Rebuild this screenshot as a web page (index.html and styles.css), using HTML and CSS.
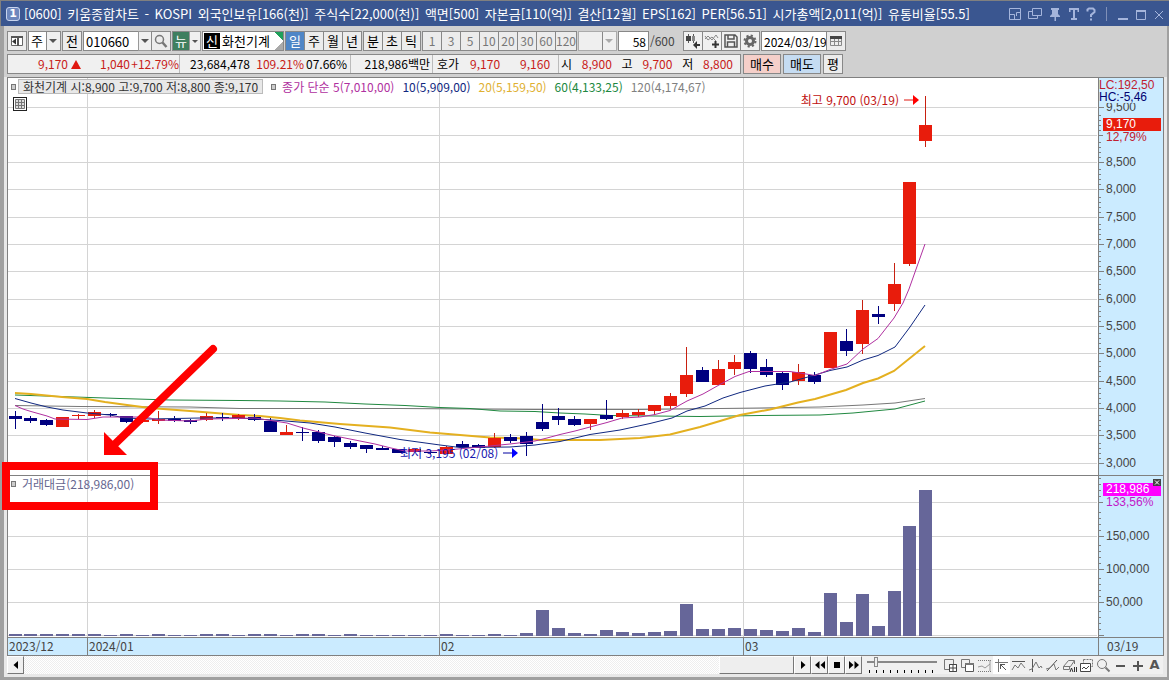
FILE: index.html
```html
<!DOCTYPE html>
<html lang="ko">
<head>
<meta charset="utf-8">
<title>[0600] 키움종합차트</title>
<link rel="stylesheet" href="styles.css">
</head>
<body>
<div class="window">
  <header class="titlebar">
    <span class="win-num">1</span>
    <h1 class="title">
      <span>[0600]</span><span>키움종합차트</span><span>-</span><span>KOSPI</span><span>외국인보유[166(천)]</span><span>주식수[22,000(천)]</span><span>액면[500]</span><span>자본금[110(억)]</span><span>결산[12월]</span><span>EPS[162]</span><span>PER[56.51]</span><span>시가총액[2,011(억)]</span><span>유통비율[55.5]</span>
    </h1>
    <div class="win-tools">
      <button aria-label="화면 축소"><svg width="14" height="14" viewBox="0 0 14 14"><path d="M1.500 1.500h11v11h-11zM1.500 7.500h5v5M12 5.500H8.500V9"/></svg></button>
      <button aria-label="화면 복사"><svg width="14" height="14" viewBox="0 0 14 14"><path d="M4.500 1.500h9v7h-9zM4 4.500H.500v7h9V9"/></svg></button>
      <button aria-label="고정"><svg width="14" height="14" viewBox="0 0 14 14"><path class="fill" d="M3 1h8v2h-1v4l2 2v1H8v4H6.500v-4H2V9l2-2V3H3z"/></svg></button>
      <button aria-label="글꼴"><svg width="12" height="14" viewBox="0 0 12 14"><path class="fill" d="M1 1h10v4H9.500V3H7v8h2v2H3v-2h2V3H2.500v2H1z"/></svg></button>
      <button aria-label="도움말"><svg width="10" height="14" viewBox="0 0 10 14"><path class="thick" d="M1.500 4.500V2.500L3 1.500h4l1.500 1.500v2L5 8v2"/><path class="fill" d="M4 11.500h2v2H4z"/></svg></button>
      <i class="bar"></i>
      <button aria-label="최소화"><svg width="12" height="14" viewBox="0 0 12 14"><path class="thick" d="M1 12h10"/></svg></button>
      <button aria-label="최대화"><svg width="12" height="14" viewBox="0 0 12 14"><path d="M1.500 4h9v8.500h-9z"/><path class="thick" d="M1 4h10"/></svg></button>
      <button aria-label="닫기"><svg width="12" height="14" viewBox="0 0 12 14"><path d="M2 4l8 8M10 4l-8 8"/></svg></button>
    </div>
  </header>

  <main class="frame">
    <div class="toolbar">
      <button class="btn" aria-label="패널"><svg width="14" height="14" viewBox="0 0 14 14"><path d="M1.500 2.500h11v9h-11z" fill="#fff" stroke="#666"/><path d="M1 2h12v2H1zM7 3h2v9H7z" fill="#555"/><path d="M6 4.500v6L2 7.500z" fill="#333"/></svg></button>
      <div class="combo combo-type"><select aria-label="종목 구분"><option>주</option></select></div>
      <button class="btn">전</button>
      <div class="group">
        <input class="field code" aria-label="종목 코드" value="010660">
        <button class="arrow" aria-label="종목 목록"></button>
        <button class="btn" aria-label="검색"><svg width="14" height="14" viewBox="0 0 14 14" fill="none" stroke="#777"><circle cx="5.500" cy="5.500" r="4" stroke-width="1.500"/><path d="M8.500 8.500l4 4.500" stroke-width="2.500"/></svg></button>
      </div>
      <div class="group"><button class="btn news">뉴</button><button class="arrow small" aria-label="뉴스 목록"></button></div>
      <div class="stock"><b>신</b><span>화천기계</span></div>
      <div class="group periods">
        <button class="btn active">일</button><button class="btn">주</button><button class="btn">월</button><button class="btn">년</button>
      </div>
      <div class="group periods">
        <button class="btn">분</button><button class="btn">초</button><button class="btn">틱</button>
      </div>
      <div class="group periods off">
        <button class="btn">1</button><button class="btn">3</button><button class="btn">5</button><button class="btn">10</button><button class="btn">20</button><button class="btn">30</button><button class="btn">60</button><button class="btn">120</button>
      </div>
      <div class="combo combo-min"><select aria-label="분 단위" disabled><option></option></select></div>
      <label class="count"><input class="field" value="58" aria-label="조회 개수"><span>/600</span></label>
      <div class="group icons">
        <button class="btn" aria-label="봉 추가"><svg width="16" height="16" viewBox="0 0 16 16"><path d="M3.500 1v9M8.500 1v9" stroke="#555"/><path d="M1 3h5v5H1z" fill="#444"/><path d="M7 3h3v5H7z" fill="#888"/><path d="M15 11h-3V8l-4 4 4 4v-3h3z" fill="#333"/></svg></button>
        <button class="btn" aria-label="지표 추가"><svg width="16" height="16" viewBox="0 0 16 16" fill="none"><path d="M1 6l3-3 4 4 4-5 2 3M1 3l3 4 4-3 4 4" stroke="#888"/><path d="M11.500 8v7M8 11.500h7" stroke="#333" stroke-width="2"/></svg></button>
        <button class="btn" aria-label="저장"><svg width="16" height="16" viewBox="0 0 16 16" fill="none" stroke="#555" stroke-width="1.500"><path d="M2 2h10l2 2v10H2zM5 2v4h6V2M4.500 14V9h7v5"/></svg></button>
        <button class="btn" aria-label="설정"><svg width="16" height="16" viewBox="0 0 16 16" fill="none" stroke="#666"><circle cx="8" cy="8" r="3.500" stroke-width="3"/><circle cx="8" cy="8" r="5.500" stroke-width="2" stroke-dasharray="2.160"/></svg></button>
      </div>
      <div class="group date">
        <input class="field" aria-label="조회 일자" value="2024/03/19">
        <button class="btn" aria-label="달력"><svg width="12" height="12" viewBox="0 0 12 12" fill="none"><path d="M.500 2.500h11v8H.500zM.500 6.500h11M4.500 3v8M8.500 3v8" stroke="#888"/><path d="M0 1h12v3H0z" fill="#444"/></svg></button>
      </div>
    </div>

    <div class="quotes">
      <div class="quote-box">
        <div class="cell c-price red"><span class="w-a">9,170</span><svg width="10" height="9" viewBox="0 0 10 9"><path d="M5 0l5 9H0z" fill="#e01810"/></svg><span class="w-b">1,040</span><span class="w-c">+12.79%</span></div>
        <div class="cell c-vol"><span class="w-d">23,684,478</span><span class="w-g red">109.21%</span><span>07.66%</span></div>
        <div class="cell c-amt"><span>218,986백만</span></div>
        <div class="cell c-ask"><span>호가</span><span class="w-e red">9,170</span><span class="w-f red">9,160</span></div>
        <div class="cell c-ohl"><span>시</span><span class="red">8,900</span><span>고</span><span class="red">9,700</span><span>저</span><span class="red">8,800</span></div>
      </div>
      <button class="btn buy">매수</button>
      <button class="btn sell">매도</button>
      <button class="btn">평</button>
    </div>

    <section class="chart">
      <div class="plot">
        <svg id="plot" class="marks" viewBox="8 78 1090 559" preserveAspectRatio="none" role="img" aria-label="화천기계 일봉 차트"></svg>
        <div class="legend">
          <i class="knob"></i><span class="legend-name">화천기계 시:8,900 고:9,700 저:8,800 종:9,170</span>
          <i class="knob"></i><span class="ma5">종가 단순 5(7,010,00)</span><span class="ma10">10(5,909,00)</span><span class="ma20">20(5,159,50)</span><span class="ma60">60(4,133,25)</span><span class="ma120">120(4,174,67)</span>
        </div>
        <button class="grid-btn" aria-label="표 보기"><svg width="10" height="10" viewBox="0 0 10 10" fill="#ddd" stroke="#777"><path d="M.500.500h9v9h-9zM.500 3.500h9M.500 6.500h9M3.500.500v9M6.500.500v9"/></svg></button>
        <span class="note high">최고 9,700 (03/19)<svg width="15" height="10" viewBox="0 0 15 10"><path d="M0 5h10" stroke="#e01810"/><path d="M9 0l6 5-6 5z" fill="#f00"/></svg></span>
        <span class="note low">최저 3,195 (02/08)<svg width="15" height="10" viewBox="0 0 15 10"><path d="M0 5h10" stroke="#0000a0"/><path d="M9 0l6 5-6 5z" fill="#00f"/></svg></span>
        <div class="legend vol-legend"><i class="knob"></i><span>거래대금(218,986,00)</span></div>
      </div>
      <div class="axis">
        <svg id="axis" class="marks" viewBox="1098 78 65 559" preserveAspectRatio="none" aria-hidden="true"></svg>
        <div id="labels"></div>
        <div class="limits"><span class="lc">LC:192,50</span><span>HC:-5,46</span></div>
        <div class="tag tag-price"><b>9,170</b><span>12,79%</span></div>
        <div class="tag tag-vol"><b>218,986</b><span>133,56%</span><button aria-label="닫기"><svg width="8" height="7" viewBox="0 0 8 7"><path d="M2 1.500l4 4M6 1.500l-4 4" stroke="#fff"/></svg></button></div>
      </div>
      <div class="dates"><span class="d0">2023/12</span><span class="d1">2024/01</span><span class="d2">02</span><span class="d3">03</span></div>
      <div class="date-now">03/19</div>
    </section>

    <footer class="bottom">
      <button class="bev" aria-label="왼쪽"><svg width="14" height="14" viewBox="0 0 14 14"><path d="M9 3v8L4.500 7z"/></svg></button>
      <div class="track"><div class="thumb"></div></div>
      <button class="bev" aria-label="오른쪽"><svg width="14" height="14" viewBox="0 0 14 14"><path d="M5 3v8l4.500-4z"/></svg></button>
      <button class="bev" aria-label="뒤로"><svg width="14" height="14" viewBox="0 0 14 14"><path d="M6.500 3v8L2 7zM12 3v8L7.500 7z"/></svg></button>
      <button class="bev" aria-label="정지"><svg width="14" height="14" viewBox="0 0 14 14"><path d="M4 4h6v6H4z"/></svg></button>
      <button class="bev" aria-label="앞으로"><svg width="14" height="14" viewBox="0 0 14 14"><path d="M2 3v8l4.500-4zM7.500 3v8L12 7z"/></svg></button>
      <div class="speed"><input type="range" aria-label="속도" min="0" max="10" value="1"></div>
      <div class="tools">
        <button aria-label="차트 추가"><svg viewBox="0 0 15 15"><path d="M1.500 1.500h9v10h-9z"/><path d="M6.500 6.500h7v7h-7z" fill="#fff"/><path d="M6.500 6.500h7v7h-7zM10 6.500v7M6.500 10h7" stroke="#444"/></svg></button>
        <button aria-label="차트 겹치기"><svg viewBox="0 0 15 15"><path d="M1.500 1.500h8v8h-8z"/><path d="M5.500 5.500h8v8h-8z" fill="#fff" stroke="#555"/><path d="M5 6h9" stroke-width="2"/></svg></button>
        <button aria-label="구간"><svg viewBox="0 0 15 15"><path d="M1 2.500h13M1 13.500h13" stroke-dasharray="1 1"/><path d="M1 9l4-1 3 2 5-4M13 2v11" stroke="#999"/></svg></button>
        <button class="on" aria-label="선택"><svg viewBox="0 0 15 15"><path d="M1 4.500h13M4.500 1v13"/><path d="M6 6l6 6M6.500 11V6.500H11" stroke="#555"/></svg></button>
        <button aria-label="수평선"><svg viewBox="0 0 15 15"><path d="M1 3.500h13" stroke="#555"/><path d="M1 12l3-5 3 3 3-5 4 5"/></svg></button>
        <button aria-label="수직선"><svg viewBox="0 0 15 15"><path d="M4.500 1v13" stroke="#555"/><path d="M1 12l3-1 4-7 3 6 2-2 1 2"/></svg></button>
        <button aria-label="추세선"><svg viewBox="0 0 15 15"><path d="M2 13L12 2" stroke="#555"/><path d="M1 11l4-1 4-4 2 6 3-3"/></svg></button>
        <button aria-label="모두 지우기"><svg viewBox="0 0 15 15"><path d="M1.500 8.500l5-6h6l-4 6zM1.500 8.500v3h6v-3M12.500 3v3"/><path d="M8 14l1.500-4 1.500 4M12.500 9v5M14.500 9v5" stroke="#333"/></svg></button>
        <button aria-label="차트 보기"><svg viewBox="0 0 15 15"><path d="M4.500 1.500h9v7h-9z" stroke-dasharray="2 1"/><path d="M1.500 5.500h10v8h-10z" fill="#fff" stroke="#444"/><path d="M3 11l2-2 2 2 3-3" stroke="#444"/></svg></button>
        <button aria-label="돋보기"><svg viewBox="0 0 15 15"><circle cx="6" cy="6" r="4.500"/><path d="M9.500 9.500l4 4" stroke-width="2"/></svg></button>
        <button aria-label="축소"><svg viewBox="0 0 15 15"><path d="M3 8h9" stroke="#555" stroke-width="2"/></svg></button>
        <button aria-label="확대"><svg viewBox="0 0 15 15"><path d="M3 8h10M8 3v10" stroke="#555" stroke-width="2"/></svg></button>
        <button class="auto" aria-label="자동">A</button>
      </div>
    </footer>
  </main>

  <svg class="callout" viewBox="0 0 1169 680" preserveAspectRatio="none" aria-hidden="true">
    <path d="M6 466h148v40H6z" fill="none" stroke="#f00" stroke-width="8"/>
    <path d="M213 349L116 443" stroke="#f00" stroke-width="8" stroke-linecap="round"/>
    <path d="M104 432v23h23z" fill="#f00"/>
  </svg>
</div>
<script src="chart.js"></script>
</body>
</html>
```
FILE: styles.css
```css
* { box-sizing: border-box; }
body { margin: 0; }
body, button, input, select {
  font-family: "Noto Sans CJK KR", sans-serif;
  font-size: 13px;
  line-height: 16px;
  color: #000;
}
button { margin: 0; padding: 0; border: 0; background: none; }
svg { display: block; flex: none; }

.window {
  position: relative;
  display: flex;
  flex-direction: column;
  min-width: 1169px;
  height: 100vh;
  border-top: 1px solid #808080;
  background: #e8e8e8;
  overflow: hidden;
  white-space: nowrap;
}

/* title bar */
.titlebar {
  display: flex;
  align-items: center;
  height: 25px;
  flex: none;
  padding: 0 4px 0 5px;
  background: #3a5690;
  border-left: 1px solid #808080;
}
.win-num {
  width: 14px;
  height: 14px;
  border: 1px solid #c8d4ee;
  border-radius: 3px;
  background: #6d87bd;
  color: #fff;
  font: bold 11px/12px "DejaVu Sans", sans-serif;
  text-align: center;
}
.title {
  display: flex;
  justify-content: space-between;
  flex: 0 1 946px;
  margin: 0 0 0 4px;
  color: #fff;
  font: 400 13px/24px "Noto Sans CJK KR", sans-serif;
}
.win-tools { display: flex; align-items: center; gap: 6px; margin-left: auto; }
.win-tools svg { fill: none; stroke: #a5b5dc; }
.win-tools .fill { fill: #a5b5dc; stroke: none; }
.win-tools .thick { stroke-width: 2; }
.bar { width: 1px; height: 14px; margin: 0 4px; background: #8090b8; }

/* body frame */
.frame {
  display: flex;
  flex-direction: column;
  flex: 1;
  min-height: 0;
  border: solid #a0a0a0;
  border-width: 0 2px 3px 4px;
}
.toolbar, .quotes {
  display: flex;
  align-items: center;
  background: #d0d0d0;
  padding-left: 3px;
}
.toolbar { align-items: flex-start; padding-top: 5px; height: 27px; gap: 1px; }
.quotes { height: 24px; gap: 2px; padding-bottom: 2px; }
.btn {
  display: flex;
  align-items: center;
  justify-content: center;
  min-width: 20px;
  height: 20px;
  border: 1px solid #888;
  background: #ececec;
}
.group { display: flex; }
.group > * + * { margin-left: -1px; }
.field {
  height: 20px;
  padding: 0 2px;
  border: 1px solid #888;
  border-radius: 0;
  background: #fff;
}
.code { width: 56px; }
.arrow {
  display: flex;
  align-items: center;
  justify-content: center;
  width: 14px;
  height: 20px;
  border: 1px solid #999;
  background: #f0f0f0;
}
.arrow::before, .combo::after {
  content: "";
  border: 4px solid transparent;
  border-top-color: #555;
  border-bottom: 0;
}
.arrow.small { width: 12px; }
.arrow.small::before { border-width: 3px 3px 0; }
.combo {
  position: relative;
  display: flex;
  width: 33px;
  height: 20px;
  border: 1px solid #888;
  background: linear-gradient(#888, #888) right 13px top / 1px 100% no-repeat #f0f0f0;
}
.combo::after { position: absolute; right: 3px; top: 7px; pointer-events: none; }
.combo select {
  appearance: none;
  width: 100%;
  margin-right: 14px;
  padding: 0 2px;
  border: 0;
  background: #fff;
}
.combo-min { width: 39px; border-color: #aaa; }
.combo-min::after { border-top-color: #aaa; }
.combo-min select { background: #eee; }
.news { width: 18px; min-width: 0; background: #3f7f5f; color: #fff; }
.stock {
  display: flex;
  align-items: center;
  width: 82px;
  height: 20px;
  padding: 1px;
  border: 1px solid #888;
  background:
    linear-gradient(to top right, transparent 50%, #1fa05a 50%) right top / 8px 9px no-repeat,
    linear-gradient(to bottom right, transparent 50%, #aaa 50%) right bottom / 8px 9px no-repeat,
    #fff;
}
.stock b { width: 16px; background: #000; color: #fff; font-weight: 400; text-align: center; }
.stock span { padding-left: 2px; }
.active { background: #4f86c6; color: #fff; }
.off .btn { color: #777; font-size: 12px; }
.count { display: flex; align-items: center; width: 64px; gap: 1px; }
.count input { width: 31px; text-align: right; font-size: 12px; }
.count span { color: #444; font-size: 12px; }
.icons .btn { background: #f0f0f0; }
.date input { width: 66px; font-size: 12px; padding-right: 0; }

/* quotes */
.quote-box {
  display: flex;
  width: 734px;
  height: 20px;
  border: 1px solid #888;
  background: #f0f0f0;
  font-size: 12px;
}
.cell { display: flex; align-items: center; border-right: 1px solid #bbb; text-align: right; }
.red { color: #c82018; }
.c-price { width: 172px; }
.c-vol { width: 171px; }
.c-amt { width: 82px; padding-right: 2px; justify-content: flex-end; }
.c-ask { width: 126px; padding-left: 4px; }
.c-ohl { flex: 1; justify-content: space-between; padding: 0 7px 0 2px; border: 0; }
.w-a { width: 63px; padding-right: 3px; }
.w-b { width: 50px; padding-right: 1px; }
.w-c { width: 48px; }
.w-d { width: 70px; }
.w-g { width: 56px; padding-right: 2px; }
.w-e { width: 41px; }
.w-f { width: 50px; }
.quotes > .btn { background: #ececec; }
.quotes > .buy { width: 38px; background: #f5cfc9; }
.quotes > .sell { width: 38px; background: #c5dcf2; }

/* chart */
.chart {
  display: grid;
  grid-template: minmax(0, 1fr) 18px / minmax(0, 1fr) 65px;
  flex: 1;
  min-height: 0;
  margin: 0 3px;
  border: 1px solid #808080;
  background: #cbebff;
  font-size: 12px;
}
.plot { position: relative; background: #fff; }
.axis { position: relative; color: #444; font-family: "Liberation Sans", sans-serif; }
.marks { position: absolute; width: 100%; height: 100%; }
.legend { position: absolute; top: 1px; left: 3px; display: flex; align-items: center; gap: 8px; height: 15px; }
.knob { width: 5px; height: 6px; border: 1px solid #777; background: #ccc; }
.legend-name { margin-left: -6px; padding: 0 4px; border: 1px solid #bbb; background: #e8e8e8; color: #333; line-height: 13px; }
.ma5 { color: #b030a0; margin-left: -2px; }
.ma10 { color: #102880; }
.ma20 { color: #e0b030; }
.ma60 { color: #208840; }
.ma120 { color: #808080; }
.vol-legend { top: 71.200%; gap: 6px; color: #666690; }
.grid-btn { position: absolute; left: 5px; top: 19px; padding: 1px; border: 1px solid #222; background: #fff; }
.note { position: absolute; display: flex; align-items: center; gap: 5px; }
.high { right: 179px; top: 14px; color: #c01010; }
.low { left: 392px; top: 367px; color: #1818b0; }
.tick { position: absolute; left: 8px; transform: translateY(-50%); }
.limits { position: absolute; inset: 0 0 auto 1px; display: flex; flex-direction: column; padding-top: 1px; background: #cbebff; color: #000070; line-height: 12px; }
.lc { color: #c02030; }
.tag { position: absolute; left: 5px; right: 2px; line-height: 12px; }
.tag b { display: block; padding-left: 3px; color: #fff; font-weight: 400; line-height: 13px; }
.tag span { padding-left: 3px; display: block; width: 54px; background: #cbebff; }
.tag-price { top: 40px; color: #c02030; }
.tag-price b { background: #e81c0c; }
.tag-vol { top: 405px; color: #c018c8; }
.tag-vol b { background: #f0f; }
.tag-vol button { position: absolute; right: 0; top: -4px; background: #444; }
.dates, .date-now { border-top: 1px solid #808080; color: #444; }
.dates { display: grid; grid-template-columns: 79px 352px 304px 1fr; }
.dates span { padding-left: 1px; }
.dates span + span { border-left: 1px solid #808080; }
.date-now { padding-left: 8px; border-left: 1px solid #808080; }

/* bottom bar */
.bottom { display: flex; height: 21px; padding: 0 4px 3px 3px; background: #e8e8e8; }
.bev {
  display: flex;
  align-items: center;
  justify-content: center;
  width: 17px;
  border: 1px solid;
  border-color: #fff #777 #777 #fff;
  background: #f0f0f0;
}
.track { flex: 1; background: repeating-conic-gradient(#fff 0 25%, #eee 0 50%) 0 0 / 2px 2px; }
.thumb { width: 75px; height: 100%; margin-left: auto; border: 1px solid; border-color: #fff #777 #777 #fff; background: #eee; }
.speed {
  width: 80px;
  padding: 0 5px;
  background: repeating-linear-gradient(90deg, #000 0 1px, transparent 1px 7px) 7px 14px / 68px 3px no-repeat #f0f0f0;
}
.speed input { appearance: none; display: block; width: 70px; height: 12px; margin: 0; background: linear-gradient(#888, #888) 0 5px / 100% 2px no-repeat; }
.speed input::-webkit-slider-thumb { appearance: none; width: 4px; height: 10px; border: 1px solid #888; background: #eee; }
.tools { display: flex; width: 221px; background: #f0f0f0; }
.tools button { display: flex; align-items: center; justify-content: center; flex: 1; }
.tools svg { width: 15px; height: 15px; fill: none; stroke: #777; }
.tools .on { background: #fff; }
.tools .auto { color: #555; font: bold 13px/16px "DejaVu Sans", sans-serif; }

.callout { position: absolute; left: 0; top: -1px; width: 100%; height: 100vh; pointer-events: none; }
```
FILE: chart.js
```js
// Each bar: [body top, body bottom, wick top, wick bottom, 1 = up / 0 = down, volume bar top]
const bars = [
  [416,419,411,429,0,634],[418,421,416,423,0,634],[420,425,419,426,0,634],[417,427,417,427,1,634],
  [415,416,414,419,1,634],[412,416,410,418,1,634],[414,415,413,417,0,635],[416,422,416,423,0,634],
  [420,422,417,423,1,635],[419,421,411,424,1,634],[419,421,416,422,0,635],[420,422,419,424,0,635],
  [416,420,413,421,1,634],[417,418,413,421,0,634],[415,419,414,420,1,635],[417,420,414,421,0,634],
  [421,432,418,432,0,634],[432,435,425,435,1,635],[432,433,427,441,0,634],[432,441,430,443,0,634],
  [437,442,436,447,0,635],[443,447,441,449,0,634],[445,449,445,453,0,635],[448,450,446,450,0,635],
  [449,453,449,453,0,635],[449,452,449,452,1,635],[452,453,450,454,0,635],[447,454,446,454,1,634],
  [444,447,441,448,0,635],[445,448,444,448,0,635],[438,447,433,448,1,634],[437,441,434,443,0,635],
  [436,444,432,456,0,633],[422,429,404,431,0,610],[416,420,408,425,0,628],[419,425,416,426,0,633],
  [419,424,419,430,1,634],[415,419,400,420,0,630],[413,417,410,419,1,632],[412,415,409,417,1,633],
  [405,411,405,415,1,632],[396,406,393,409,1,631],[375,394,347,397,1,604],[370,382,367,382,0,629],
  [369,385,360,385,1,629],[362,369,355,375,1,628],[353,369,351,373,0,629],[367,375,359,377,0,630],
  [373,385,371,390,0,631],[372,381,364,385,1,628],[375,382,372,384,0,632],[332,368,332,368,1,593],
  [341,351,329,356,0,622],[310,344,300,354,1,594],[314,317,306,324,0,626],[284,304,263,311,1,591],
  [182,264,182,266,1,526],[125,141,96,147,1,490]
];
const averages = [
  ["#777", 1, "15,405.5 80,406.5 190,407 240,408.5 400,408.5 535,409.5 640,409.5 760,408 820,407 863,405 895,403 925,398.5"],
  ["#208840", 1, "15,395 60,396.5 120,398.5 170,400 240,400.5 280,401 325,402 365,404 405,405.5 440,407.5 470,408.5 500,411 535,411.5 560,413 585,414 610,415.5 700,416.5 760,415.5 820,415 853,413 895,409 925,401"],
  ["#e4b020", 2, "15,393 31,394 62,397 87,399 105,402 127,405 150,408 190,411 215,413 240,415 260,416 280,418 300,420.5 340,424 390,427.5 430,432.5 460,435 490,437.5 525,438.5 540,440 600,440 640,438 670,434.5 700,427 740,415 770,409.5 798,402.5 815,399 846,390 863,383 878,378.5 894,371 925,346"],
  ["#102880", 1, "15,398.5 31,403 47,407 63,410 87,413 110,415 125,418 150,419 200,418 240,418 280,420.5 310,423 335,427 365,433 400,439.5 440,445 460,447.5 510,447 535,445 560,441.5 590,434.5 620,430 650,423.5 672,418 687,411 705,406 723,398 740,392.5 765,386 790,382 815,375 830,370.5 847,367 863,360 878,355.5 895,347 910,327 925,305"],
  ["#b030a0", 1, "15,405.5 23,409 31,411.5 47,416 55,419 87,419.5 103,417 127,417 145,417 159,420 190,421 207,419 235,418.5 255,418 271,420.5 287,423 303,428 319,432 335,436 350,439 375,444 391,448 405,451 430,451 447,450 480,447 510,444 535,441 547,438 560,434.5 575,431 590,427 607,422.5 622,418 640,417 655,414.5 670,410.5 687,401 703,394 719,385 735,376.5 749,371.5 790,371.5 800,373 815,375.5 830,369.5 847,364 863,349 878,338.5 894,318 903,303 909,289 925,244"]
];
const priceRows = [107,135,162,189,217,244,271,299,326,353,381,408,435,463];
const volumeRows = [502,536,569,602,635];
const monthLines = [87, 439, 743];

const barLeft = i => i === 0 ? 9 : i < 56 ? 24 + 16 * (i - 1) : i === 56 ? 903 : 919;
const path = (d, attrs) => `<path d="${d}" fill="none" ${attrs}/>`;
const fill = (d, color) => `<path d="${d}" fill="${color}"/>`;

let grid = "", wicks = ["", ""], bodies = ["", ""], volumes = "";
[...priceRows, ...volumeRows].forEach(y => grid += `M8 ${y + .5}H1097`);
monthLines.forEach(x => grid += `M${x + .5} 78V637`);
bars.forEach(([top, bottom, high, low, up, vol], i) => {
  const x = barLeft(i);
  wicks[up] += `M${x + 6.5} ${high}V${low}`;
  bodies[up] += `M${x} ${top}h13V${bottom}h-13z`;
  volumes += `M${x} ${vol}h13V636h-13z`;
});
document.getElementById("plot").innerHTML =
  path(grid, 'stroke="#d4d4d4"') +
  path("M8 475.5H1098", 'stroke="#808080"') +
  averages.slice(0, 3).map(a => path("M" + a[2], `stroke="${a[0]}" stroke-width="${a[1]}"`)).join("") +
  path(wicks[0], 'stroke="#000080"') + path(wicks[1], 'stroke="#c82010"') +
  fill(bodies[0], "#000080") + fill(bodies[1], "#e81c0c") +
  averages.slice(3).map(a => path("M" + a[2], `stroke="${a[0]}"`)).join("") +
  fill(volumes, "#666699");

let ticks = "M1098.5 78V637M1098 475.5H1163";
priceRows.forEach(y => {
  ticks += `M1098 ${y + .5}h6`;
  for (let k = 1; k < 5; k++) ticks += `M1098 ${y - 5 * k + .5}h3`;
});
volumeRows.forEach(y => {
  ticks += `M1098 ${y + .5}h6`;
  for (let k = 1; k < 5; k++) ticks += `M1098 ${y - 6 * k + .5}h3`;
});
document.getElementById("axis").innerHTML = path(ticks, 'stroke="#808080"');

const label = (y, text) => `<span class="tick" style="top:${(y - 78) / 5.59}%">${text}</span>`;
document.getElementById("labels").innerHTML =
  priceRows.map((y, i) => i === 1 ? "" : label(y, (9500 - i * 500).toLocaleString("en-US"))).join("") +
  [150000, 100000, 50000].map((v, i) => label(volumeRows[i + 1], v.toLocaleString("en-US"))).join("");
```
